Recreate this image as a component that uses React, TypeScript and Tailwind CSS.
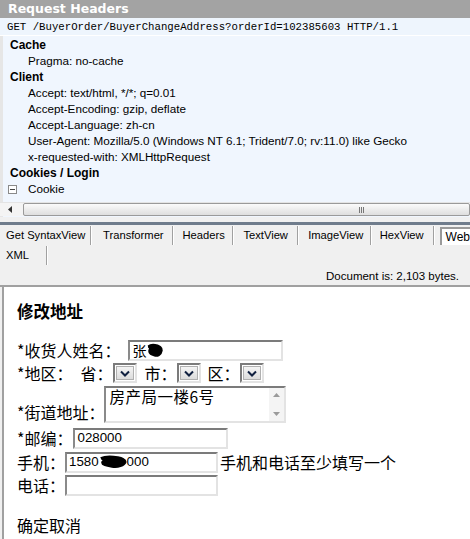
import React from "react";

const ui = { fontFamily: '"Liberation Sans", Arial, sans-serif' };
const cjk = { fontFamily: '"Noto Sans CJK SC", "Liberation Sans", sans-serif' };

function Sep() {
  return <div className="w-[2px] self-stretch border-l border-[#a0a0a0] border-r border-r-white" />;
}

function Select() {
  return (
    <div className="w-[24px] h-[20px] border-2 border-t-[#7b7b7b] border-l-[#7b7b7b] border-r-[#e3e3e3] border-b-[#e3e3e3] bg-white p-[1px]">
      <div className="w-full h-full bg-gradient-to-b from-[#f4f4f4] to-[#dcdcdc] border border-[#b0b0b0] flex items-center justify-center">
        <svg width="10" height="7" viewBox="0 0 10 7">
          <path d="M1 1.5 L5 5.5 L9 1.5" fill="none" stroke="#102040" strokeWidth="2" />
        </svg>
      </div>
    </div>
  );
}

function Input({ w, children }: { w: number; children?: React.ReactNode }) {
  return (
    <div
      className="relative h-[21px] border-2 border-t-[#7b7b7b] border-l-[#8a8a8a] border-r-[#e3e3e3] border-b-[#e3e3e3] bg-white flex items-center pl-[2px] text-[13.3px] text-black"
      style={{ width: w, ...ui }}
    >
      {children}
    </div>
  );
}

function Blob({ w, h }: { w: number; h: number }) {
  return (
    <svg width={w} height={h} viewBox="0 0 30 16" className="absolute" preserveAspectRatio="none">
      <path
        d="M2 4 C8 1 14 2 20 3 C24 4 28 5 28 8 C27 12 20 14 14 13 C8 12 3 11 4 8 C6 5 14 5 22 8 C18 10 10 10 6 9"
        fill="#000"
        stroke="#000"
        strokeWidth="3"
        strokeLinejoin="round"
      />
    </svg>
  );
}

export default function App() {
  const tabs = [
    { t: "Get SyntaxView", w: 92, pl: 6 },
    { t: "Transformer", w: 81, pl: 11 },
    { t: "Headers", w: 60, pl: 9 },
    { t: "TextView", w: 64, pl: 9 },
    { t: "ImageView", w: 72, pl: 9 },
    { t: "HexView", w: 62, pl: 8 },
  ];
  return (
    <div className="w-[470px] h-[539px] overflow-hidden bg-[#f0f0f0] flex flex-col" style={ui}>
      {/* Request headers panel */}
      <div
        className="h-[18px] bg-[#a3a3a3] text-white font-bold text-[12.5px] leading-[18px] pl-[8px] shrink-0"
        style={{ fontFamily: '"DejaVu Sans", Verdana, sans-serif' }}
      >
        Request Headers
      </div>
      <div
        className="h-[18px] bg-[#eef5fd] text-[10.7px] leading-[18px] pl-[7px] text-black shrink-0 border-b border-[#ffffff]"
        style={{ fontFamily: '"Liberation Mono", monospace' }}
      >
        GET /BuyerOrder/BuyerChangeAddress?orderId=102385603 HTTP/1.1
      </div>
      <div className="flex shrink-0 h-[181px]">
        <div className="w-[3px] bg-[#e6e6e6]" />
        <div className="flex-1 bg-[#f0f6fe] pt-[1px] text-[11.7px] text-black flex flex-col">
          <div className="h-[16px] leading-[16px] pl-[7px] font-bold text-[12px]">Cache</div>
          <div className="h-[16px] leading-[16px] pl-[25px]">Pragma: no-cache</div>
          <div className="h-[16px] leading-[16px] pl-[7px] font-bold text-[12px]">Client</div>
          <div className="h-[16px] leading-[16px] pl-[25px]">Accept: text/html, */*; q=0.01</div>
          <div className="h-[16px] leading-[16px] pl-[25px]">Accept-Encoding: gzip, deflate</div>
          <div className="h-[16px] leading-[16px] pl-[25px]">Accept-Language: zh-cn</div>
          <div className="h-[16px] leading-[16px] pl-[25px]">
            User-Agent: Mozilla/5.0 (Windows NT 6.1; Trident/7.0; rv:11.0) like Gecko
          </div>
          <div className="h-[16px] leading-[16px] pl-[25px]">x-requested-with: XMLHttpRequest</div>
          <div className="h-[16px] leading-[16px] pl-[7px] font-bold text-[12px]">Cookies / Login</div>
          <div className="h-[16px] leading-[16px] pl-[5px] flex items-center">
            <div className="w-[9px] h-[9px] border border-[#8a8a8a] bg-white flex items-center justify-center mr-[11px]">
              <div className="w-[5px] h-[1px] bg-[#444]" />
            </div>
            Cookie
          </div>
          <div className="flex-1" />
          {/* scrollbar */}
          <div className="h-[14px] bg-[#f4f4f4] border-t border-[#e4e4e4] flex items-center mb-[1px] -ml-[3px]">
            <div className="w-[20px] flex items-center justify-center">
              <svg width="4" height="7" viewBox="0 0 4 7">
                <path d="M4 0 L0 3.5 L4 7 Z" fill="#333" />
              </svg>
            </div>
            <div className="flex-1 h-[13px] ml-[3px] border border-[#9a9a9a] rounded-[2px] bg-gradient-to-b from-[#fbfbfb] to-[#dedede] relative">
              <div className="absolute left-[335px] top-[3px] flex gap-[1px]">
                <div className="w-[1px] h-[6px] bg-[#777]" />
                <div className="w-[1px] h-[6px] bg-[#777]" />
                <div className="w-[1px] h-[6px] bg-[#777]" />
              </div>
            </div>
          </div>
        </div>
      </div>
      <div className="h-[5px] shrink-0 bg-[#f0f0f0]" />
      <div className="h-[3px] shrink-0 bg-[#6f7c8c]" />
      {/* tabs */}
      <div className="h-[19px] shrink-0 flex items-stretch text-[11.2px] text-black mt-[1px]">
        {tabs.map((tb, i) => (
          <React.Fragment key={i}>
            <div className="leading-[18px]" style={{ width: tb.w, paddingLeft: tb.pl }}>
              {tb.t}
            </div>
            <Sep />
          </React.Fragment>
        ))}
        <div className="ml-[5px] mt-[1px] flex-1 bg-white border-t-2 border-l-2 border-[#9a9a9a] leading-[16px] pl-[4px] text-[12px]">
          Web
        </div>
      </div>
      <div className="h-[19px] shrink-0 flex items-stretch text-[11.2px] mt-[1px]">
        <div className="w-[46px] pl-[6px] leading-[18px]">XML</div>
        <Sep />
      </div>
      <div className="h-[20px] shrink-0 text-[11.5px] text-right pr-[11px] leading-[22px]">
        Document is: 2,103 bytes.
      </div>
      {/* web view */}
      <div className="flex-1 flex border-t-2 border-[#a0a0a0]">
        <div className="w-[2px] bg-[#f0f0f0]" />
        <div className="flex-1 bg-white border-l-2 border-[#a0a0a0] text-[16px] text-black pl-[13px]" style={cjk}>
          <div className="h-[26px] mt-[11px] font-bold text-[16.5px] leading-[26px]">修改地址</div>
          <div className="h-[20px] mt-[16px] flex items-center">
            <span>*收货人姓名：</span>
            <span className="ml-[8px]" />
            <Input w={155}>
              <span style={cjk} className="text-[14px]">张</span>
              <span className="relative ml-[1px] w-[16px] h-[15px] inline-block">
                <Blob w={16} h={15} />
              </span>
            </Input>
          </div>
          <div className="h-[20px] mt-[3px] flex items-center">
            <span>*地区：</span>
            <span className="w-[8px]" />
            <span>省：</span>
            <Select />
            <span className="ml-[8px]">市：</span>
            <Select />
            <span className="ml-[7px]">区：</span>
            <Select />
          </div>
          <div className="mt-[2px] flex items-end h-[38px]">
            <span className="leading-[22px]">*街道地址：</span>
            <div className="ml-[0px] w-[182px] h-[37px] border-2 border-t-[#7b7b7b] border-l-[#8a8a8a] border-r-[#e3e3e3] border-b-[#e3e3e3] bg-white flex">
              <div className="flex-1 pl-[3px] text-[15.5px] leading-[17px] tracking-[0.5px]">房产局一楼6号</div>
              <div className="w-[15px] bg-[#f4f4f4] flex flex-col justify-between items-center py-[5px]">
                <svg width="7" height="4" viewBox="0 0 7 4"><path d="M0 4 L3.5 0 L7 4 Z" fill="#9a9a9a" /></svg>
                <svg width="7" height="4" viewBox="0 0 7 4"><path d="M0 0 L3.5 4 L7 0 Z" fill="#9a9a9a" /></svg>
              </div>
            </div>
          </div>
          <div className="h-[22px] mt-[4px] flex items-center">
            <span>*邮编：</span>
            <span className="ml-[1px]" />
            <Input w={155}>028000</Input>
          </div>
          <div className="h-[22px] mt-[2px] flex items-center">
            <span>手机：</span>
            <Input w={153}>
              <span>1580</span>
              <span className="relative inline-block w-[28px] h-[14px]">
                <Blob w={28} h={14} />
              </span>
              <span>000</span>
            </Input>
            <span className="ml-[2px]">手机和电话至少填写一个</span>
          </div>
          <div className="h-[22px] mt-[1px] flex items-center">
            <span>电话：</span>
            <Input w={153} />
          </div>
          <div className="mt-[18px] leading-[22px]">确定取消</div>
        </div>
      </div>
    </div>
  );
}
